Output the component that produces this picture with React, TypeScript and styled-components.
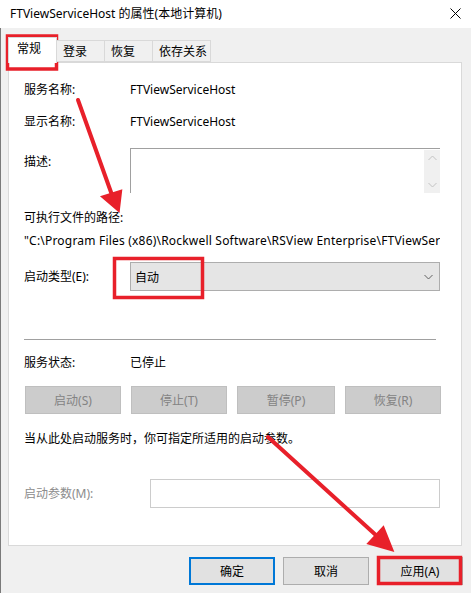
import React from "react";
import styled, { createGlobalStyle } from "styled-components";

const Global = createGlobalStyle`
  html, body { margin: 0; padding: 0; background: #ffffff; }
  body {
    font-family: "Segoe UI", "Noto Sans", "Noto Sans CJK SC", sans-serif;
    font-size: 12px;
    color: #000;
  }
`;

const Window = styled.div`
  position: relative;
  width: 471px;
  height: 593px;
  display: flex;
  flex-direction: column;
  overflow: hidden;
  background: #fff;
`;

const TitleBar = styled.div`
  height: 28px;
  flex: none;
  display: flex;
  align-items: center;
  justify-content: space-between;
  padding: 0 10px 2px 10px;
  box-sizing: border-box;
  background: #fff;
  font-size: 12px;
`;

const Body = styled.div`
  flex: 1;
  display: flex;
  flex-direction: column;
  background: #f0f0f0;
  border-left: 1px solid #7a7a7a;
  padding: 9px 8px 0 7px;
`;

const TabStrip = styled.div`
  display: flex;
  align-items: flex-end;
  height: 25px;
  position: relative;
  z-index: 1;
`;

const Tab = styled.div<{ $w: number; $active?: boolean }>`
  width: ${(p) => p.$w}px;
  box-sizing: border-box;
  height: ${(p) => (p.$active ? 26 : 22)}px;
  margin-bottom: ${(p) => (p.$active ? -1 : 0)}px;
  padding-left: ${(p) => (p.$active ? 8 : 6)}px;
  display: flex;
  align-items: center;
  padding-bottom: ${(p) => (p.$active ? 5 : 1)}px;
  background: ${(p) => (p.$active ? "#fff" : "#f0f0f0")};
  border: 1px solid #d9d9d9;
  border-bottom: ${(p) => (p.$active ? "none" : "1px solid #d9d9d9")};
  border-left: ${(p) => (p.$active ? "1px solid #d9d9d9" : "none")};
  font-size: 12px;
`;

const Panel = styled.div`
  height: 484px;
  box-sizing: border-box;
  margin-right: 1px;
  background: #fff;
  border: 1px solid #d9d9d9;
  padding: 17px 21px 0 15px;
  display: flex;
  flex-direction: column;
`;

const Row = styled.div<{ $top: number; $label?: number }>`
  display: grid;
  grid-template-columns: ${(p) => p.$label ?? 106}px 1fr;
  align-items: center;
  margin-top: ${(p) => p.$top}px;
  min-height: 20px;
`;

const TopRow = styled(Row)`
  align-items: start;
`;

const Label = styled.div<{ $muted?: boolean; $pad?: number }>`
  color: ${(p) => (p.$muted ? "#8c8c8c" : "#000")};
  padding-top: ${(p) => p.$pad ?? 0}px;
  line-height: 20px;
  white-space: nowrap;
`;

const Value = styled.div`
  line-height: 20px;
  white-space: nowrap;
`;

const Line = styled.div<{ $top: number; $spread?: boolean }>`
  margin-top: ${(p) => p.$top}px;
  line-height: 20px;
  white-space: nowrap;
  overflow: hidden;
  letter-spacing: ${(p) => (p.$spread ? "0.2px" : "normal")};
`;

const DescBox = styled.div`
  height: 45px;
  box-sizing: border-box;
  border-top: 1px solid #a0a0a0;
  border-left: 1px solid #a0a0a0;
  display: flex;
  justify-content: flex-end;
  padding-top: 1px;
`;

const ScrollBar = styled.div`
  width: 16px;
  background: #f0f0f0;
  display: flex;
  flex-direction: column;
  justify-content: space-between;
  align-items: center;
  padding: 5px 0 5px;
  box-sizing: border-box;
`;

const Select = styled.div`
  height: 29px;
  box-sizing: border-box;
  background: #e5e5e5;
  border: 1px solid #adadad;
  display: flex;
  align-items: center;
  justify-content: space-between;
  padding: 0 6px 0 4px;
`;

const Separator = styled.div`
  margin-top: 48px;
  margin-right: 4px;
  height: 1px;
  background: #a0a0a0;
`;

const ButtonGrid = styled.div`
  margin-top: 13px;
  margin-left: 1px;
  display: grid;
  grid-template-columns: 96px 96px 98px 96px;
  column-gap: 10px;
`;

const DisabledButton = styled.div`
  height: 28px;
  box-sizing: border-box;
  background: #cccccc;
  border: 1px solid #bfbfbf;
  color: #838383;
  display: flex;
  align-items: center;
  justify-content: center;
`;

const InputBox = styled.div`
  height: 29px;
  box-sizing: border-box;
  border: 1px solid #cccccc;
  background: #fff;
`;

const Footer = styled.div`
  display: flex;
  justify-content: flex-end;
  gap: 8px;
  margin-top: 11px;
`;

const DialogButton = styled.div<{ $default?: boolean }>`
  width: 86px;
  height: 28px;
  box-sizing: border-box;
  background: #e1e1e1;
  border: ${(p) => (p.$default ? "2px solid #0078d7" : "1px solid #adadad")};
  display: flex;
  align-items: center;
  justify-content: center;
`;

const Overlay = styled.svg`
  position: absolute;
  left: 0;
  top: 0;
  pointer-events: none;
`;

const Chevron = ({ up }: { up?: boolean }) => (
  <svg width="9" height="6" viewBox="0 0 9 6">
    <polyline
      points={up ? "0.5,5 4.5,1 8.5,5" : "0.5,1 4.5,5 8.5,1"}
      fill="none"
      stroke="#c2c2c2"
      strokeWidth="1"
    />
  </svg>
);

export default function App() {
  return (
    <Window>
      <Global />
      <TitleBar>
        <span>FTViewServiceHost 的属性(本地计算机)</span>
        <svg width="11" height="11" viewBox="0 0 11 11">
          <path d="M0.5 0.5 L10.5 10.5 M10.5 0.5 L0.5 10.5" stroke="#000" strokeWidth="1" />
        </svg>
      </TitleBar>
      <Body>
        <TabStrip>
          <Tab $w={49} $active>常规</Tab>
          <Tab $w={48}>登录</Tab>
          <Tab $w={48}>恢复</Tab>
          <Tab $w={58}>依存关系</Tab>
        </TabStrip>
        <Panel>
          <Row $top={0}>
            <Label>服务名称:</Label>
            <Value>FTViewServiceHost</Value>
          </Row>
          <Row $top={12}>
            <Label>显示名称:</Label>
            <Value>FTViewServiceHost</Value>
          </Row>
          <TopRow $top={16}>
            <Label $pad={4}>描述:</Label>
            <DescBox>
              <ScrollBar>
                <Chevron up />
                <Chevron />
              </ScrollBar>
            </DescBox>
          </TopRow>
          <Line $top={15}>可执行文件的路径:</Line>
          <Line $top={3} $spread>"C:\Program Files (x86)\Rockwell Software\RSView Enterprise\FTViewServiceHost.exe"</Line>
          <Row $top={11}>
            <Label>启动类型(E):</Label>
            <Select>
              <span>自动</span>
              <svg width="9" height="6" viewBox="0 0 9 6">
                <polyline points="0.5,1 4.5,5 8.5,1" fill="none" stroke="#606060" strokeWidth="1" />
              </svg>
            </Select>
          </Row>
          <Separator />
          <Row $top={13}>
            <Label>服务状态:</Label>
            <Value>已停止</Value>
          </Row>
          <ButtonGrid>
            <DisabledButton>启动(S)</DisabledButton>
            <DisabledButton>停止(T)</DisabledButton>
            <DisabledButton>暂停(P)</DisabledButton>
            <DisabledButton>恢复(R)</DisabledButton>
          </ButtonGrid>
          <Line $top={15}>当从此处启动服务时，你可指定所适用的启动参数。</Line>
          <Row $top={30} $label={126}>
            <Label $muted>启动参数(M):</Label>
            <InputBox />
          </Row>
        </Panel>
        <Footer>
          <DialogButton $default>确定</DialogButton>
          <DialogButton>取消</DialogButton>
          <DialogButton>应用(A)</DialogButton>
        </Footer>
      </Body>
      <Overlay width="471" height="593" viewBox="0 0 471 593">
        <g fill="none" stroke="#e8202a" strokeWidth="3.5">
          <rect x="7.5" y="36" width="49" height="33" />
          <rect x="114.5" y="258.5" width="88" height="39" />
          <rect x="378.5" y="557.5" width="82" height="26" />
        </g>
        <g stroke="#e8202a" strokeWidth="4" strokeLinecap="round" fill="#e8202a">
          <line x1="78" y1="100" x2="112" y2="195" />
          <polygon points="118,209 120,192 104,197" />
          <line x1="268" y1="437" x2="378" y2="537" />
          <polygon points="391,549 383,529 370,543" />
        </g>
      </Overlay>
    </Window>
  );
}
